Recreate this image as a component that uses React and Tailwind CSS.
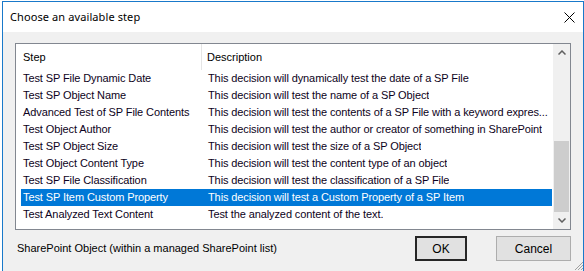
import React from "react";

const rows = [
  ["Test SP File Dynamic Date", "This decision will dynamically test the date of a SP File"],
  ["Test SP Object Name", "This decision will test the name of a SP Object"],
  ["Advanced Test of SP File Contents", "This decision will test the contents of a SP File with a keyword expres..."],
  ["Test Object Author", "This decision will test the author or creator of something in SharePoint"],
  ["Test SP Object Size", "This decision will test the size of a SP Object"],
  ["Test Object Content Type", "This decision will test the content type of an object"],
  ["Test SP File Classification", "This decision will test the classification of a SP File"],
  ["Test SP Item Custom Property", "This decision will test a Custom Property of a SP Item"],
  ["Test Analyzed Text Content", "Test the analyzed content of the text."],
];

export default function App() {
  return (
    <div
      className="relative w-[584px] h-[271px] overflow-hidden bg-white pt-[1px] pl-[2px] flex text-[11px] text-black"
      style={{ fontFamily: '"Liberation Sans", Arial, sans-serif' }}
    >
      <div className="w-[582px] h-[270px] border-l border-t border-r border-[#1979ca] flex flex-col">
        {/* title bar */}
        <div className="h-[30px] bg-white flex items-center justify-between pl-[7px] pr-[8px]">
          <span className="text-[11px] tracking-[0.1px] text-black" style={{ fontFamily: '"Noto Sans", "Open Sans", sans-serif' }}>
            Choose an available step
          </span>
          <svg width="11" height="11" viewBox="0 0 11 11">
            <path d="M0.5 0.5 L10.5 10.5 M10.5 0.5 L0.5 10.5" stroke="#000" strokeWidth="1" fill="none" />
          </svg>
        </div>
        {/* body */}
        <div className="flex-1 bg-[#f0f0f0] pl-[12px] pt-[11px] flex flex-col">
          <div className="w-[556px] h-[187px] border border-[#828790] bg-white flex">
            <div className="w-[537px] flex flex-col">
              <div className="h-[26px] flex items-center">
                <div className="w-[186px] pl-[7px] h-full flex items-center border-r border-[#e5e5e5]">Step</div>
                <div className="pl-[5px]">Description</div>
              </div>
              {rows.map(([a, b], i) => {
                const sel = i === 7;
                return (
                  <div
                    key={i}
                    className={`ml-[5px] w-[531px] h-[17px] flex items-center whitespace-nowrap tracking-[-0.1px] ${sel ? "bg-[#0078d7] text-white" : "text-[#0d0221]"}`}
                  >
                    <div className="w-[182px] pl-[2px] overflow-hidden">{a}</div>
                    <div className="pl-[5px] overflow-hidden">{b}</div>
                  </div>
                );
              })}
            </div>
            {/* scrollbar */}
            <div className="w-[17px] bg-[#f0f0f0] flex flex-col">
              <div className="h-[17px] flex items-center justify-center">
                <svg width="8" height="5" viewBox="0 0 8 5">
                  <path d="M0.5 4.5 L4 1 L7.5 4.5" stroke="#606060" strokeWidth="1.5" fill="none" />
                </svg>
              </div>
              <div className="flex-1 flex flex-col justify-end">
                <div className="h-[71px] mx-[1px] bg-[#cdcdcd]" />
              </div>
              <div className="h-[17px] flex items-center justify-center">
                <svg width="8" height="5" viewBox="0 0 8 5">
                  <path d="M0.5 0.5 L4 4 L7.5 0.5" stroke="#606060" strokeWidth="1.5" fill="none" />
                </svg>
              </div>
            </div>
          </div>
          <div className="mt-[6px] w-[556px] h-[25px] flex items-center">
            <span className="pl-[2px] flex-1">SharePoint Object (within a managed SharePoint list)</span>
            <button className="w-[52px] h-[25px] bg-[#e1e1e1] border-2 border-[#262626] flex items-center justify-center text-[12px]" style={{ fontFamily: '"Liberation Sans", Arial, sans-serif' }}>
              OK
            </button>
            <button className="ml-[29px] w-[75px] h-[25px] bg-[#e1e1e1] border border-[#adadad] flex items-center justify-center text-[12px]" style={{ fontFamily: '"Liberation Sans", Arial, sans-serif' }}>
              Cancel
            </button>
          </div>
        </div>
      </div>
      <svg className="absolute right-0 bottom-0" width="12" height="12" viewBox="0 0 12 12">
        <path d="M11 3 L3 11 M11 6 L6 11 M11 9 L9 11" stroke="#a0a0a0" strokeWidth="1" fill="none" />
      </svg>
    </div>
  );
}
